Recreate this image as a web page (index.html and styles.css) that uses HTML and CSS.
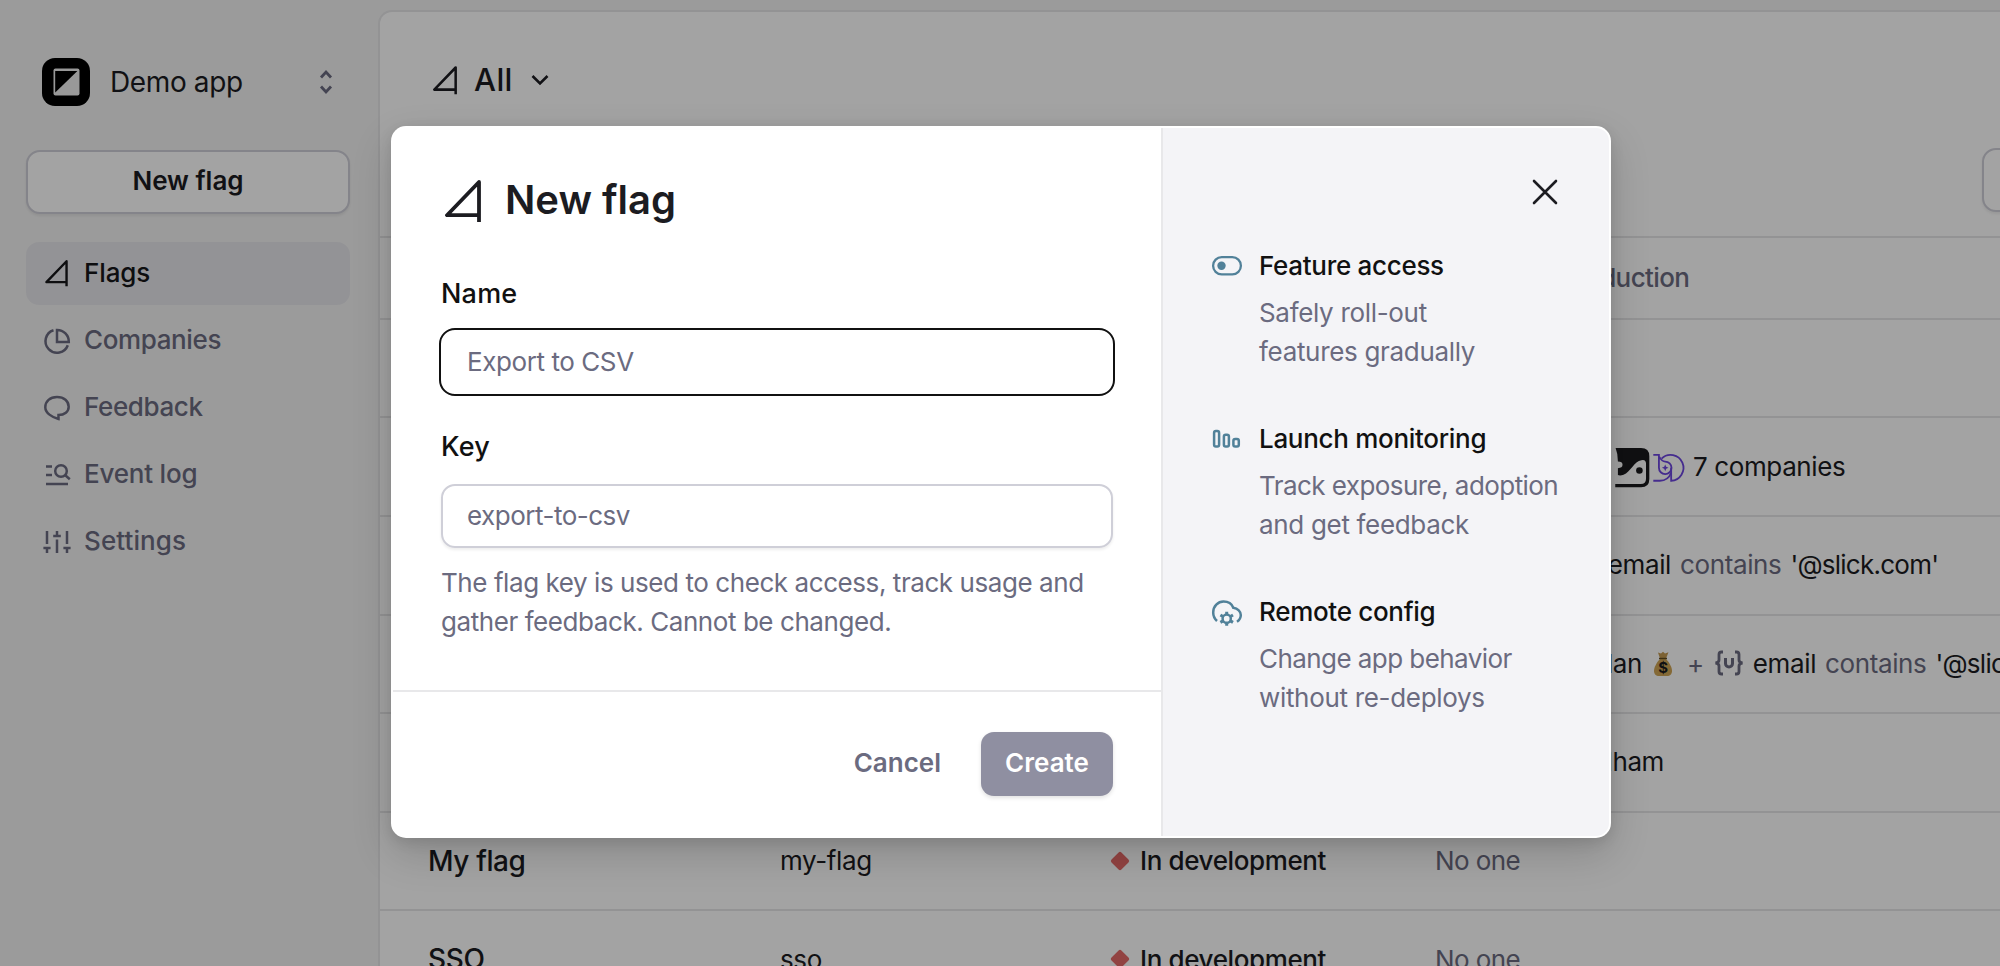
FILE: index.html
```html
<!DOCTYPE html>
<html lang="en">
<head>
<meta charset="utf-8">
<title>New flag</title>
<link rel="stylesheet" href="styles.css">
</head>
<body>
<svg class="defs" width="0" height="0" aria-hidden="true">
  <symbol id="flag" viewBox="0 0 36 43">
    <path d="M34 42V2L2 35.2H34" fill="none" stroke="currentColor" stroke-width="3.8" stroke-linejoin="round" stroke-linecap="butt"/>
  </symbol>
</svg>
<div class="app">
  <aside class="sidebar">
    <div class="workspace">
      <svg class="logo" viewBox="0 0 48 48"><rect width="48" height="48" rx="13" fill="#000"/><rect x="11.500" y="10.500" width="26" height="27" rx="2" fill="#f0f0f0"/><path d="M13.200 13h22.200L13.200 34.500z" fill="#000"/></svg>
      <span class="workspace-name">Demo app</span>
      <svg class="updown" viewBox="0 0 14 26"><path d="M2 8.500 7 3l5 5.500M2 17.500 7 23l5-5.500" fill="none" stroke="currentColor" stroke-width="2.800"/></svg>
    </div>
    <button class="btn new-flag">New flag</button>
    <nav class="nav">
      <a class="nav-item active"><svg class="ico ico-flag"><use href="#flag"/></svg><span>Flags</span></a>
      <a class="nav-item"><svg class="ico" viewBox="0 0 28 28"><g fill="none" stroke="currentColor" stroke-width="2.500"><path d="M10.500 3.300A11.500 11.500 0 1 0 24.800 18.200"/><path d="M14 3v12h11.800A11.700 11.700 0 0 0 14 3z"/></g></svg><span>Companies</span></a>
      <a class="nav-item"><svg class="ico" viewBox="0 0 28 28"><path d="M14 3C7 3 2.300 7.300 2.300 13.200 2.300 19 9 23.300 15.500 25v-3.900C21.500 21 25.700 17.700 25.700 12.800 25.700 7 21 3 14 3z" fill="none" stroke="currentColor" stroke-width="2.500"/></svg><span>Feedback</span></a>
      <a class="nav-item"><svg class="ico" viewBox="0 0 28 28"><g fill="none" stroke="currentColor" stroke-width="2.500"><path d="M3 5.500h6M3 14h6M3 23h22"/><circle cx="18" cy="10" r="5.800"/><path d="m22 14 4.800 4.300"/></g></svg><span class="wide">Event log</span></a>
      <a class="nav-item"><svg class="ico" viewBox="0 0 28 28"><path d="M4 3v13M4 20v5M.4 20h7.200M14 3v4.500M10.200 8h7.600M14 11.500V25M24 3v13M24 20v5M20.400 20h7.200" fill="none" stroke="currentColor" stroke-width="2.500"/></svg><span class="wider">Settings</span></a>
    </nav>
  </aside>
  <main class="main">
    <div class="view">
      <svg class="view-flag"><use href="#flag"/></svg>
      <span class="view-name">All</span>
      <svg class="chev" viewBox="0 0 18 12"><path d="m1.500 2 7.500 7.500L16.500 2" fill="none" stroke="currentColor" stroke-width="2.600"/></svg>
    </div>
    <div class="tools"><button class="btn tool-btn"></button></div>
    <div class="row head"><span class="c5"><span class="lead lead-head">Production</span></span></div>
    <div class="row"></div>
    <div class="row">
      <span class="c5">
        <svg class="avatars" viewBox="92 72 228 130">
          <path d="M104 81h78q25 0 25 25v69q0 25-25 25h-78V190h77q16 0 16-16v-45q0-14-14-11c-22 3-33 36-54 44q-10 4-17 1v-21q14 0 14-10t-14-10q0-24-7-41z" fill="#1a1a1d"/>
          <circle cx="177" cy="149" r="10" fill="#1a1a1d"/>
          <g fill="none" stroke="#6d46df" stroke-width="5.500"><path d="M219 102h17v39a19 19 0 1 0 19-19q-10 0-18-14"/><path d="M244 113a39 39 0 1 1 29 67v-39"/><path d="M219 180h20c16 0 28-8 34-24"/></g>
          <path d="m255 131 3 7 7 3-7 3-3 7-3-7-7-3 7-3z" fill="#6d46df"/>
        </svg>
        <span>7 companies</span>
      </span>
    </div>
    <div class="row"><span class="c5"><span class="lead lead-email">email</span><span class="dim gap">contains</span><span class="gap value">'@slick.com'</span></span></div>
    <div class="row">
      <span class="c5"><span class="lead lead-plan">Plan</span>
        <svg class="bag" viewBox="0 0 18 25"><path d="M4 1.500 7 2.500 9 .8l2 1.700 3.500-1.200L12 7.500H6z" fill="#c39a52"/><path d="M6 8h6c3 3 6 8 6 12 0 3-2 5-5 5H5c-3 0-5-2-5-5C0 16 3 11 6 8z" fill="#cfa555"/><path d="M5 7.500h8" stroke="#5e4a1e" stroke-width="1.400"/><text x="9" y="21.500" text-anchor="middle" class="dollar">$</text></svg>
        <span class="plus dim">+</span>
        <svg class="attr" viewBox="0 0 30 26"><g fill="none" stroke="currentColor" stroke-width="2.800"><path d="M9 2H7.500Q5 2 5 4.500V10q0 2.500-3.500 3Q5 13.500 5 16v5.500Q5 24 7.500 24H9M21 2h1.500Q25 2 25 4.500V10q0 2.500 3.500 3-3.500.5-3.500 3v5.500q0 2.500-2.500 2.500H21"/><path d="M11.500 8v5.500a3.500 3.500 0 0 0 7 0V8" stroke-width="3"/></g></svg>
        <span>email</span><span class="dim gap">contains</span><span class="gap value">'@slick.com'</span></span>
    </div>
    <div class="row"><span class="c5"><span class="lead lead-ham">Pelham</span></span></div>
    <div class="row"><span class="c1">My flag</span><span class="c2">my-flag</span><span class="c3"><i class="dia"></i>In development</span><span class="c4">No one</span></div>
    <div class="row"><span class="c1">SSO</span><span class="c2">sso</span><span class="c3"><i class="dia"></i>In development</span><span class="c4">No one</span></div>
  </main>
</div>
<div class="overlay">
  <section class="modal">
    <form class="form">
      <div class="body">
        <h1 class="title"><svg class="title-flag"><use href="#flag"/></svg><span>New flag</span></h1>
        <label class="label">Name</label>
        <div class="input focused">Export to CSV</div>
        <label class="label">Key</label>
        <div class="input">export-to-csv</div>
        <p class="help">The flag key is used to check access, track usage and<br>gather feedback. Cannot be changed.</p>
      </div>
      <div class="footer"><span class="cancel">Cancel</span><span class="create">Create</span></div>
    </form>
    <div class="side">
      <svg class="close" viewBox="0 0 24 24"><path d="M1 1l22 22M23 1 1 23" stroke="currentColor" stroke-width="2.600" stroke-linecap="round"/></svg>
      <div class="feature">
        <svg class="fi" viewBox="0 0 30 30"><rect x="1.100" y="6.100" width="27.800" height="17.300" rx="8.600" fill="none" stroke="currentColor" stroke-width="2.300"/><circle cx="9.500" cy="14.800" r="4.200" fill="currentColor"/></svg>
        <div><h2>Feature access</h2><p>Safely roll-out<br>features gradually</p></div>
      </div>
      <div class="feature">
        <svg class="fi" viewBox="0 0 30 30"><g fill="none" stroke="currentColor" stroke-width="2.500"><rect x="2.100" y="7.100" width="5" height="15.400" rx="1.800"/><rect x="11.900" y="10.800" width="5" height="11.700" rx="1.800"/><rect x="21.400" y="15" width="5.400" height="7.500" rx="1.800"/></g></svg>
        <div><h2>Launch monitoring</h2><p><span class="tight">Track exposure, adoption</span><br>and get feedback</p></div>
      </div>
      <div class="feature">
        <svg class="fi" viewBox="0 0 30 30"><g fill="none" stroke="currentColor" stroke-width="2.500"><path d="M5 24Q1.200 20.500 1.200 15.500C1.200 9 6 4.600 11.500 4.600c5 0 8.500 2.800 9.800 6.200 4.500.5 7.500 3.700 7.500 7.200 0 2.700-1.300 5-3.800 6.700"/><circle cx="14.700" cy="21.700" r="4.100"/></g><path d="M14.700 14.700v3.500M14.700 25.200v3.500M8.400 18l3 1.800M18 23.600l3 1.800M8.400 25.400l3-1.800M18 19.800l3-1.800" stroke="currentColor" stroke-width="3"/></svg>
        <div><h2>Remote config</h2><p><span class="tight">Change app behavior</span><br>without re-deploys</p></div>
      </div>
    </div>
  </section>
</div>
</body>
</html>
```
FILE: styles.css
```css
* { box-sizing: border-box; margin: 0; padding: 0; }
html { height: 966px; overflow: hidden; }
body { width: 2000px; height: 966px; overflow: hidden; position: relative; font-family: Inter, sans-serif; font-size: 26px; letter-spacing: -.38px; color: #1c1c21; background: #f3f3f3; white-space: nowrap; }
.defs { position: absolute; }
svg { flex: none; display: block; overflow: visible; }
.app { display: flex; height: 966px; overflow: hidden; }
.sidebar { width: 378px; padding: 58px 28px 0 26px; flex: none; }
.workspace { display: flex; align-items: center; height: 48px; padding: 0 17px 0 16px; font-size: 28px; }
.workspace-name { padding-bottom: 1px; }
.logo { width: 48px; height: 48px; margin-right: 20px; }
.updown { width: 14px; height: 26px; margin-left: auto; color: #6b6b80; }
.btn { font: inherit; color: inherit; background: #fff; border: 2px solid #cfcfd8; border-radius: 14px; height: 64px; box-shadow: 0 2px 3px rgba(0, 0, 0, .07); }
.new-flag { display: block; width: 324px; margin-top: 44px; padding-bottom: 3px; font-weight: 600; letter-spacing: 0; }
.nav { margin-top: 28px; display: grid; gap: 4px; }
.nav-item { display: flex; align-items: center; height: 63px; padding-left: 17px; border-radius: 13px; font-weight: 500; color: #6b6b80; }
.nav-item span { padding-bottom: 2px; }
.nav-item.active { background: #e7e7eb; color: #16161a; letter-spacing: -.1px; }
.wide { letter-spacing: -.2px; }
.wider { letter-spacing: .1px; }
.tight { letter-spacing: -.56px; }
.ico { width: 28px; height: 28px; margin-right: 13px; }
.ico-flag { width: 23px; height: 27px; margin-left: 2px; margin-right: 16px; }
.main { flex: none; width: 1640px; height: 956px; margin-top: 10px; border: 2px solid #e6e6e8; border-bottom: 0; border-radius: 14px 0 0 0; background: #fff; overflow: hidden; }
.view { display: flex; align-items: center; height: 136px; padding-left: 53px; font-size: 31px; font-weight: 500; letter-spacing: .4px; }
.view-flag { width: 24px; height: 29px; margin-right: 17px; }
.view-name { padding-bottom: 1px; }
.chev { width: 18px; height: 12px; margin-left: 18px; }
.tools { height: 88px; padding-left: 1602px; }
.tool-btn { width: 120px; }
.row { display: grid; grid-template-columns: 350px 331px 324px 125px 1fr; align-items: center; height: 98.600px; padding: 0 0 1px 50px; border-top: 2px solid #e6e6e8; }
.row.head { height: 81.800px; font-weight: 500; color: #6b6b80; letter-spacing: -.6px; }
.c1 { font-size: 28px; font-weight: 500; margin-left: -2px; }
.c3 { display: flex; align-items: center; font-weight: 500; }
.c4, .dim { color: #6b6b80; }
.c4 { letter-spacing: -.6px; }
.c5 { grid-column: 5; display: flex; align-items: center; }
.dia { width: 14px; height: 14px; margin: 0 13px 0 2px; border-radius: 2px; background: #e46a68; transform: rotate(45deg); }
.lead { text-align: right; }
.lead-head { width: 122px; }
.lead-email { width: 111px; }
.lead-plan { width: 82px; }
.lead-ham { width: 104px; }
.gap { margin-left: 9px; }
.value { letter-spacing: -.75px; }
.avatars { width: 76px; height: 43px; margin: 0 6px 0 51px; }
.bag { width: 18px; height: 25px; margin-left: 12px; }
.dollar { font-size: 15px; font-weight: 700; fill: #1a1a1d; }
.plus { margin: 0 10px 0 15px; }
.attr { width: 30px; height: 26px; margin-right: 9px; color: #6b6b80; }
.overlay { position: absolute; inset: 0; display: flex; align-items: center; justify-content: center; padding: 0 0 2px 2px; background: rgba(0, 0, 0, .36); }
.modal { display: grid; grid-template-columns: 768px 448px; width: 1220px; height: 712px; padding: 2px; background: #fff; border-radius: 15px; box-shadow: 0 16px 40px rgba(0, 0, 0, .16), 0 4px 14px rgba(0, 0, 0, .1); }
.form { display: flex; flex-direction: column; }
.body { height: 562px; padding: 47px 48px 0; }
.title { display: flex; align-items: center; height: 48px; padding-left: 4px; font-size: 40px; font-weight: 600; letter-spacing: 0; }
.title-flag { width: 36px; height: 43px; margin: 5px 24px 0 0; }
.label { display: block; height: 36px; line-height: 36px; margin: 53px 0 16px; font-weight: 500; color: #111; font-size: 27px; letter-spacing: .2px; }
.input { display: flex; align-items: center; height: 64px; padding: 0 24px 2px; border: 2px solid #cfcfd8; border-radius: 14px; color: #6b6b80; letter-spacing: -.5px; box-shadow: 0 2px 3px rgba(0, 0, 0, .07); }
.input.focused { height: 68px; margin: 0 -2px; padding: 0 26px 2px; border-color: #111; border-radius: 16px; letter-spacing: -.42px; box-shadow: none; }
.input.focused + .label { margin: 33px 0 19px; }
.help { margin-top: 15px; line-height: 39px; color: #6b6b80; letter-spacing: -.43px; }
.footer { flex: 1; display: flex; align-items: flex-start; justify-content: flex-end; gap: 40px; padding: 40px 48px 0; border-top: 2px solid #e8e8ea; font-weight: 600; line-height: 62px; letter-spacing: 0; }
.cancel { color: #6b6b80; }
.create { width: 132px; height: 64px; text-align: center; border-radius: 13px; background: #8f8fa1; color: #fff; box-shadow: 0 2px 4px rgba(0, 0, 0, .12); }
.side { padding: 52px 52px 0 49px; background: #f4f4f7; border-left: 2px solid #e8e8ea; border-radius: 0 13px 13px 0; }
.close { width: 24px; height: 24px; margin: 0 0 44px auto; color: #1c1c21; }
.feature { display: flex; height: 173px; }
.fi { width: 30px; height: 30px; margin: 3px 17px 0 0; color: #518199; }
.feature h2 { font-size: 26px; font-weight: 500; line-height: 36px; color: #111; letter-spacing: -.3px; }
.feature p { margin-top: 9px; line-height: 39px; color: #6b6b80; letter-spacing: -.32px; }
.feature p .tight { letter-spacing: -.56px; }
```
